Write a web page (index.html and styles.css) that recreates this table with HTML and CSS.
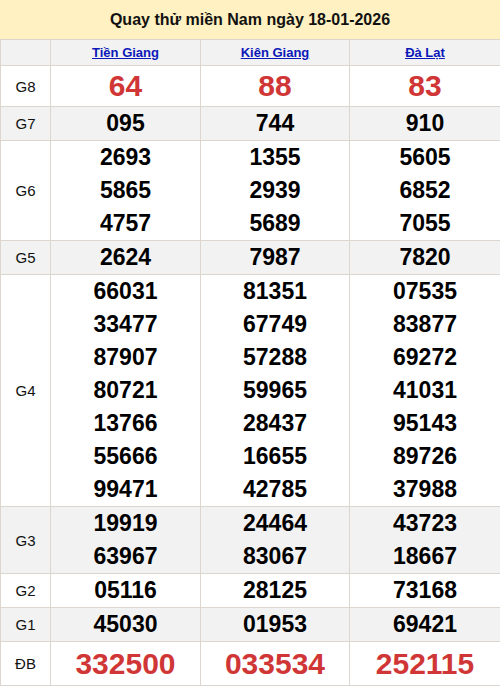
FILE: index.html
```html
<!DOCTYPE html>
<html>
<head>
<meta charset="utf-8">
<link rel="stylesheet" href="styles.css">
</head>
<body>
<div class="title">Quay thử miền Nam ngày 18-01-2026</div>
<table class="kq">
<colgroup><col class="c0"><col class="c1"><col class="c2"><col class="c3"></colgroup>
<tr class="head"><td></td><td><a href="#">Tiền Giang</a></td><td><a href="#">Kiên Giang</a></td><td><a href="#">Đà Lạt</a></td></tr>
<tr class="g8"><td class="lb">G8</td><td><div class="red">64</div></td><td><div class="red">88</div></td><td><div class="red">83</div></td></tr>
<tr class="alt"><td class="lb">G7</td><td><div>095</div></td><td><div>744</div></td><td><div>910</div></td></tr>
<tr><td class="lb">G6</td><td><div>2693</div><div>5865</div><div>4757</div></td><td><div>1355</div><div>2939</div><div>5689</div></td><td><div>5605</div><div>6852</div><div>7055</div></td></tr>
<tr class="alt"><td class="lb">G5</td><td><div>2624</div></td><td><div>7987</div></td><td><div>7820</div></td></tr>
<tr><td class="lb">G4</td>
<td><div>66031</div><div>33477</div><div>87907</div><div>80721</div><div>13766</div><div>55666</div><div>99471</div></td>
<td><div>81351</div><div>67749</div><div>57288</div><div>59965</div><div>28437</div><div>16655</div><div>42785</div></td>
<td><div>07535</div><div>83877</div><div>69272</div><div>41031</div><div>95143</div><div>89726</div><div>37988</div></td></tr>
<tr class="alt"><td class="lb">G3</td><td><div>19919</div><div>63967</div></td><td><div>24464</div><div>83067</div></td><td><div>43723</div><div>18667</div></td></tr>
<tr><td class="lb">G2</td><td><div>05116</div></td><td><div>28125</div></td><td><div>73168</div></td></tr>
<tr class="alt"><td class="lb">G1</td><td><div>45030</div></td><td><div>01953</div></td><td><div>69421</div></td></tr>
<tr class="db"><td class="lb">ĐB</td><td><div class="red">332500</div></td><td><div class="red">033534</div></td><td><div class="red">252115</div></td></tr>
</table>
</body>
</html>
```
FILE: styles.css
```css
html, body { margin: 0; padding: 0; background: #fff; }
body { font-family: "Liberation Sans", Arial, sans-serif; width: 500px; }
.title {
  height: 39px;
  line-height: 39px;
  background: #fff1c1;
  text-align: center;
  font-weight: bold;
  font-size: 16px;
  color: #111;
}
.kq {
  width: 500px;
  border-collapse: collapse;
  table-layout: fixed;
}
.c0 { width: 50px; }
.c1 { width: 150px; }
.c2 { width: 149px; }
.c3 { width: 151px; }
.kq td {
  border: 1px solid #ddd6cf;
  padding: 0;
  text-align: center;
  vertical-align: middle;
  font-weight: bold;
  font-size: 23px;
  line-height: 33px;
  color: #000;
}
.kq td div { height: 33px; }
.kq .head td {
  background: #f2f2f2;
  height: 25px;
  line-height: 25px;
  font-size: 13px;
}
.head a { color: #1a0dab; color: #0b18b8; text-decoration: underline; }
.kq td.lb { font-weight: normal; font-size: 15px; color: #111; }
.alt td { background: #f2f2f2; }
.kq td div.red { color: #d03636; font-size: 30px; }
.g8 td div.red { height: 40px; line-height: 40px; }
.db td div.red { height: 43px; line-height: 43px; }
```
